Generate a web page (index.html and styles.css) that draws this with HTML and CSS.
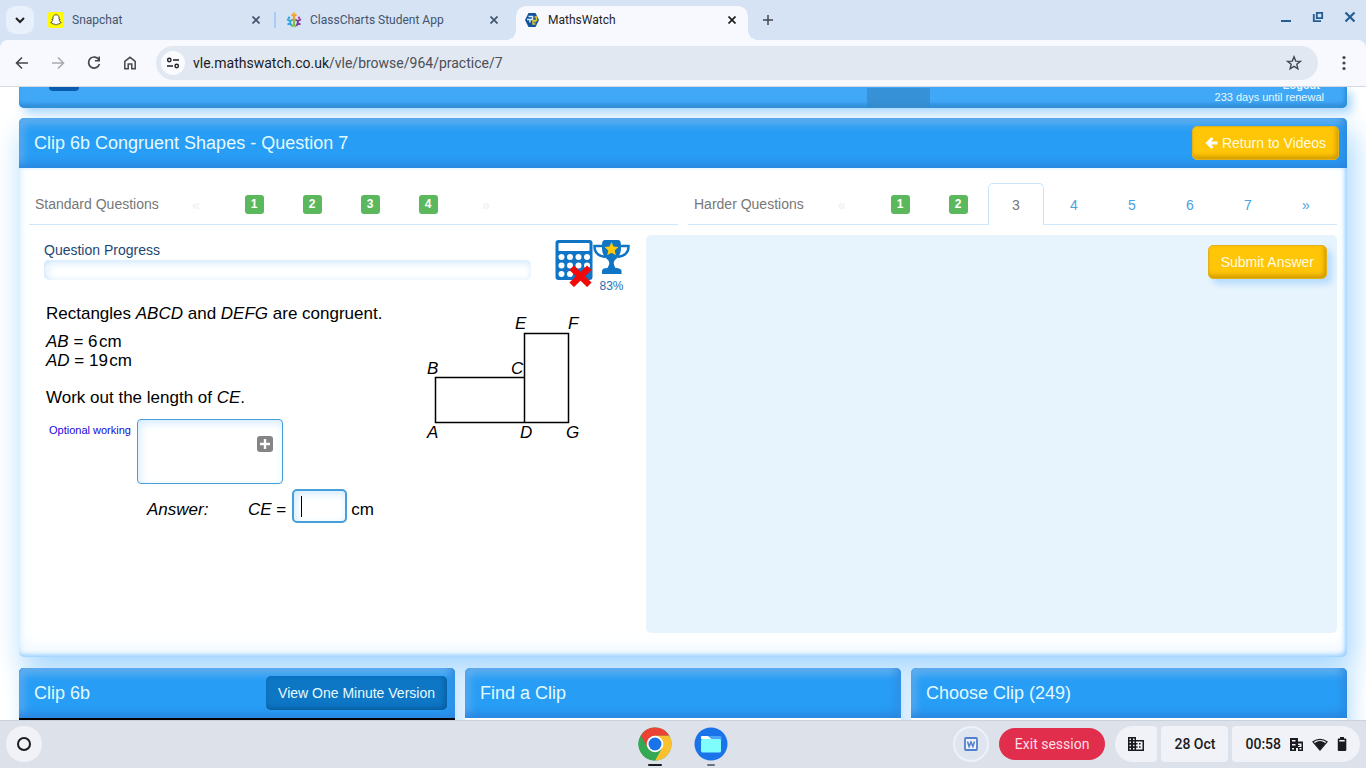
FILE: index.html
```html
<!DOCTYPE html>
<html lang="en">
<head>
<meta charset="utf-8">
<title>MathsWatch</title>
<link rel="stylesheet" href="styles.css">
</head>
<body>
<header class="tabstrip">
  <button class="tab-search" aria-label="Search tabs"><svg width="12" height="12" viewBox="0 0 12 12"><path d="M2 4l4 4 4-4" fill="none" stroke="#1f1f1f" stroke-width="2"/></svg></button>
  <div class="tab divided">
    <svg width="16" height="16" viewBox="0 0 16 16"><rect width="16" height="16" rx="2" fill="#fffc00"/><path d="M8 2.800c2 0 3.100 1.400 3.100 3.200v1.400l1-.2-.8 1.200c.4 1.200 1.200 1.900 2 2.200l-1.700.7-.4.800-1.500-.1L8 13.100l-1.700-1.100-1.500.1-.4-.8-1.700-.7c.8-.3 1.600-1 2-2.200L3.900 7.200l1 .2V6c0-1.800 1.100-3.200 3.100-3.200z" fill="#fff" stroke="#333" stroke-width=".8"/></svg>
    <span class="tab-title">Snapchat</span>
    <button class="tab-close" aria-label="Close Snapchat"><svg width="8" height="8" viewBox="0 0 8 8"><path d="M.5.5l7 7m0-7l-7 7" stroke="currentColor" stroke-width="1.700"/></svg></button>
  </div>
  <div class="tab">
    <svg width="16" height="16" viewBox="0 0 16 16"><g stroke-width="1.800" stroke-linejoin="round" fill="none"><path d="M8 7.500V4M5.500 2.500L8 4.200l2.500-1.700M8 6L6.500 8.500M8 6l1.500 2.500" stroke="#f59a2c"/><path d="M1 7.200L4 9l2.500-1.200M4 9l.3 2L1.500 12.500M4.300 11L5.500 14" stroke="#2ba5dd"/><path d="M15 7.200L12 9 9.500 7.800M12 9l-.3 2 2.800 1.500M11.700 11l-1.200 3" stroke="#7d3b98"/><path d="M8 9.500V12l-1.800 3M8 12l1.800 3" stroke="#7bbf45"/></g><circle cx="8" cy="1.600" r="1.300" fill="#f5b52c"/><circle cx="3" cy="5.800" r="1.200" fill="#2ba5dd"/><circle cx="13" cy="5.800" r="1.200" fill="#b8429b"/><circle cx="8" cy="8.800" r="1.600" fill="#8fc24a"/></svg>
    <span class="tab-title">ClassCharts Student App</span>
    <button class="tab-close" aria-label="Close ClassCharts"><svg width="8" height="8" viewBox="0 0 8 8"><path d="M.5.5l7 7m0-7l-7 7" stroke="currentColor" stroke-width="1.700"/></svg></button>
  </div>
  <div class="tab active">
    <svg width="16" height="16" viewBox="0 0 16 16"><path d="M4.500 1h7L15 8l-3.500 7h-7L1 8z" fill="#12539b"/><path d="M4.500 4.500h4v3H6v3M3 7.500h3" fill="none" stroke="#d5eefb" stroke-width="1.500"/><path d="M10.500 5h2v3.500H9V12h2.500M11 8.500v2" fill="none" stroke="#e6c52c" stroke-width="1.500"/></svg>
    <span class="tab-title">MathsWatch</span>
    <button class="tab-close" aria-label="Close MathsWatch"><svg width="8" height="8" viewBox="0 0 8 8"><path d="M.5.5l7 7m0-7l-7 7" stroke="currentColor" stroke-width="1.700"/></svg></button>
  </div>
  <button class="new-tab" aria-label="New tab"><svg width="10" height="10" viewBox="0 0 10 10"><path d="M5 0v10M0 5h10" stroke="#43474e" stroke-width="1.500"/></svg></button>
  <div class="window-controls">
    <button aria-label="Minimise"><svg width="12" height="12" viewBox="0 0 12 12"><path d="M1 10h10" stroke="#235d92" stroke-width="2"/></svg></button>
    <button aria-label="Restore"><svg width="12" height="12" viewBox="0 0 12 12"><path d="M4.800 1.800h5.400v5.400H4.800zM1.800 3v7.200H9" fill="none" stroke="#235d92" stroke-width="1.800"/></svg></button>
    <button aria-label="Close window"><svg width="12" height="12" viewBox="0 0 12 12"><path d="M1.500 1.500l9 9m0-9l-9 9" stroke="#235d92" stroke-width="2.200"/></svg></button>
  </div>
</header>
<nav class="toolbar">
  <button class="tool" aria-label="Back"><svg width="16" height="16" viewBox="0 0 16 16"><path d="M14 8H3M8 2.500L2.500 8 8 13.500" fill="none" stroke="#43474e" stroke-width="1.600"/></svg></button>
  <button class="tool" aria-label="Forward"><svg width="16" height="16" viewBox="0 0 16 16"><path d="M2 8h11M8 2.500L13.500 8 8 13.500" fill="none" stroke="#a9abb0" stroke-width="1.600"/></svg></button>
  <button class="tool" aria-label="Reload"><svg width="16" height="16" viewBox="0 0 16 16"><path d="M13 5A5.500 5.500 0 1 0 13.400 9" fill="none" stroke="#43474e" stroke-width="1.700"/><path d="M13.200 1.500v4.300H8.900" fill="none" stroke="#43474e" stroke-width="1.600"/></svg></button>
  <button class="tool" aria-label="Home"><svg width="16" height="16" viewBox="0 0 16 16"><path d="M2.800 6.300L8 2.300l5.200 4v7.400H9.800V9H6.200v4.700H2.800z" fill="none" stroke="#43474e" stroke-width="1.500"/></svg></button>
  <div class="omnibox">
    <button class="site-info" aria-label="Site information"><svg width="14" height="14" viewBox="0 0 14 14"><g fill="none" stroke="#202124" stroke-width="1.400"><circle cx="3.300" cy="4" r="1.700"/><path d="M7 4h6M1 10h6"/><circle cx="10.700" cy="10" r="1.700"/></g></svg></button>
    <span class="url">vle.mathswatch.co.uk<span class="path">/vle/browse/964/practice/7</span></span>
    <button class="bookmark" aria-label="Bookmark"><svg width="16" height="16" viewBox="0 0 16 16"><path d="M8 1.800l1.700 4.300 4.600.3-3.500 2.900 1.100 4.500L8 11.400l-3.900 2.400 1.100-4.500-3.500-2.900 4.600-.3z" fill="none" stroke="#43474e" stroke-width="1.400"/></svg></button>
  </div>
  <button class="more" aria-label="Menu"><svg width="4" height="16" viewBox="0 0 4 16" fill="#43474e"><circle cx="2" cy="2.500" r="1.600"/><circle cx="2" cy="8" r="1.600"/><circle cx="2" cy="13.500" r="1.600"/></svg></button>
</nav>

<main class="page">
  <div class="site-nav">
    <span class="site-logo"></span>
    <span class="nav-current"></span>
    <div class="account"><a class="logout" href="#">Logout</a><span>233 days until renewal</span></div>
  </div>

  <section class="panel">
    <div class="heading">
      <h1>Clip 6b Congruent Shapes - Question 7</h1>
      <button class="btn yellow"><svg width="13" height="12" viewBox="0 0 13 12"><path d="M12.500 6H3M7.500 1L2.500 6l5 5" fill="none" stroke="#fff" stroke-width="2.900"/></svg>Return to Videos</button>
    </div>
    <div class="panel-body">
      <div class="question-tabs">
        <div class="tab-row">
          <span class="row-label standard">Standard Questions</span>
          <a class="q off" href="#">«</a><a class="q" href="#"><b>1</b></a><a class="q" href="#"><b>2</b></a><a class="q" href="#"><b>3</b></a><a class="q" href="#"><b>4</b></a><a class="q off" href="#">»</a>
        </div>
        <div class="tab-row">
          <span class="row-label harder">Harder Questions</span>
          <a class="q off" href="#">«</a><a class="q" href="#"><b>1</b></a><a class="q" href="#"><b>2</b></a><a class="q current" href="#">3</a><a class="q" href="#">4</a><a class="q" href="#">5</a><a class="q" href="#">6</a><a class="q" href="#">7</a><a class="q" href="#">»</a>
        </div>
      </div>
      <div class="work">
        <div class="question">
          <div class="status">
            <div class="progress">
              <span id="progress-label">Question Progress</span>
              <div class="bar" role="progressbar" aria-labelledby="progress-label" aria-valuenow="0" aria-valuemin="0" aria-valuemax="100">0</div>
            </div>
            <svg class="calculator" width="38" height="48" viewBox="0 0 38 48"><rect x=".5" y="1" width="37" height="40" rx="3" fill="#0f75c4"/><rect x="3.500" y="4" width="31" height="8" rx="1" fill="#fff"/><g fill="#fff"><circle cx="6.500" cy="18" r="3"/><circle cx="15" cy="18" r="3"/><circle cx="23.500" cy="18" r="3"/><circle cx="32" cy="18" r="3"/><circle cx="6.500" cy="26.500" r="3"/><circle cx="15" cy="26.500" r="3"/><circle cx="23.500" cy="26.500" r="3"/><circle cx="32" cy="26.500" r="3"/><circle cx="6.500" cy="35" r="3"/><circle cx="15" cy="35" r="3"/></g><path d="M19 31l13 12.500m0-12.500L19 43.500" stroke="#f00909" stroke-width="6.500" stroke-linecap="square"/></svg>
            <div class="score">
              <svg width="37" height="36" viewBox="0 0 37 36"><path d="M9 7H1.500v1c0 6 4 9 11 10M28 7h7.500v1c0 6-4 9-11 10" fill="none" stroke="#0f75c4" stroke-width="2.400"/><path d="M12 1h13c3 0 3 3 3 8 0 7-3 9-6 12-2 2-1.500 5 .5 8 3.500 0 6 1 6 3v3H9v-3c0-2 2-3 5.500-3 2-3 2.500-6 .5-8-3-3-6-5-6-12 0-5 0-8 3-8z" fill="#0f75c4"/><path d="M18.500 3l2 4.600 5 .5-3.800 3.300 1.100 4.900-4.300-2.600-4.300 2.600 1.100-4.900-3.800-3.300 5-.5z" fill="#ffc808"/></svg>
              <span>83%</span>
            </div>
          </div>
          <div class="problem">
            <div class="statement">
              <p>Rectangles <i>ABCD</i> and <i>DEFG</i> are congruent.</p>
              <p class="given"><i>AB</i> = 6&#8202;cm<br><i>AD</i> = 19&#8202;cm</p>
              <p>Work out the length of <i>CE</i>.</p>
              <div class="working">
                <label for="working">Optional working</label>
                <div class="working-box">
                  <textarea id="working"></textarea>
                  <button class="expand" aria-label="Expand working"><svg width="16" height="16" viewBox="0 0 16 16"><rect width="16" height="16" rx="3" fill="#858585"/><path d="M8 3v10M3 8h10" stroke="#fff" stroke-width="2.400"/></svg></button>
                </div>
              </div>
              <div class="answer">
                <i class="answer-label">Answer:</i>
                <label for="answer"><i>CE</i> =</label>
                <span class="answer-box"><input id="answer" type="text"><span class="caret"></span></span>
                <span>cm</span>
              </div>
            </div>
            <svg class="diagram" width="160" height="130" viewBox="0 0 160 130" role="img" aria-label="Rectangles ABCD and DEFG">
              <path d="M11.500 64.500h89v45h-89zM100.500 20.500h44v89h-44z" fill="none" stroke="#000" stroke-width="1.500"/>
              <g class="vertex"><text x="3" y="125">A</text><text x="3" y="61">B</text><text x="87" y="61">C</text><text x="96" y="125">D</text><text x="91" y="16">E</text><text x="144" y="16">F</text><text x="142" y="125">G</text></g>
            </svg>
          </div>
        </div>
        <div class="answer-pad"><button class="btn yellow raised">Submit Answer</button></div>
      </div>
    </div>
  </section>

  <div class="cards">
    <section class="card video"><div class="heading"><h2>Clip 6b</h2><button class="btn blue">View One Minute Version</button></div></section>
    <section class="card"><div class="heading"><h2>Find a Clip</h2></div></section>
    <section class="card"><div class="heading"><h2>Choose Clip (249)</h2></div></section>
  </div>
</main>

<footer class="shelf">
  <button class="launcher" aria-label="Launcher"><svg width="16" height="16" viewBox="0 0 16 16"><circle cx="8" cy="8" r="6" fill="none" stroke="#1b1b1f" stroke-width="2"/></svg></button>
  <div class="apps">
    <button class="app" aria-label="Chrome"><svg width="34" height="34" viewBox="0 0 34 34"><circle cx="17" cy="17" r="16.500" fill="#34a853"/><path d="M17 17L2.700 8.700A16.500 16.500 0 0 1 31.300 8.700H17z" fill="#ea4335"/><path d="M17 8.700h14.300A16.500 16.500 0 0 1 17 33.500l7.200-12.400z" fill="#fbc02d"/><path d="M2.700 8.700L9.800 21.200 17 17V8.700z" fill="#ea4335"/><path d="M2.700 8.700L9.900 21.200l7.100 4 4-1L17 33.500A16.500 16.500 0 0 1 2.700 8.700z" fill="#34a853"/><circle cx="17" cy="17" r="8.300" fill="#fff"/><circle cx="17" cy="17" r="6.500" fill="#1a73e8"/></svg><span class="running wide"></span></button>
    <button class="app" aria-label="Files"><svg width="34" height="34" viewBox="0 0 34 34"><circle cx="17" cy="17" r="16.500" fill="#1a73e8"/><path d="M15 9h11a1.500 1.500 0 0 1 1.500 1.500V14H15z" fill="#4ba6f8"/><rect x="7" y="12" width="20" height="13.500" rx="1.500" fill="#7ffcfc"/><path d="M7 12v-2a1 1 0 0 1 1-1h6l3.500 3z" fill="#fff"/></svg><span class="running"></span></button>
  </div>
  <div class="tray">
    <button class="word" aria-label="Document"><svg width="14" height="14" viewBox="0 0 14 14"><rect x="1" y="1" width="12" height="12" rx="1" fill="#fff" fill-opacity=".5" stroke="#527fce" stroke-width="1.800"/><path d="M3.500 4.500l1.600 5L7 5l1.900 4.500 1.600-5" fill="none" stroke="#527fce" stroke-width="1.500"/></svg></button>
    <button class="exit">Exit session</button>
    <div class="pills">
      <button class="pill" aria-label="Managed device"><svg width="16" height="14" viewBox="0 0 16 14"><path fill="#1b1b1f" fill-rule="evenodd" d="M0 0h8v3h8v11H0zM1.500 1.500v1.500H3V1.500zm3.500 0v1.500h1.500V1.500zM1.500 4.600v1.500H3V4.600zm3.500 0v1.500h1.500V4.600zM1.500 7.700v1.500H3V7.700zm3.500 0v1.500h1.500V7.700zM1.500 10.900v1.500H3v-1.500zm3.500 0v1.500h1.500v-1.500zM8 4.500v1.600h1.500v1.500H8v1.600h1.500v1.600H8v1.700h6.500v-8zm3 1.500h1.600v1.600H11zm0 3.200h1.600v1.600H11z"/></svg></button>
      <button class="pill">28 Oct</button>
      <button class="pill">00:58
        <svg width="13" height="13" viewBox="0 0 13 13"><path fill="#1b1b1f" fill-rule="evenodd" d="M0 0h8v3.500h5V13H8v-3H6v3H0zM2 2v1.500h3.500V2zm0 4v1.500h3.500V6zm0 4v1.500h2V10zm6-4.500V7h1.500v1H8v1h3.500V5.500zM9.500 10v1.500h2V10z"/></svg>
        <svg width="16" height="13" viewBox="0 0 16 13"><path fill="none" stroke="#1b1b1f" stroke-width="1.200" d="M1 3.800a11.500 11.500 0 0 1 14 0L8 12z"/><path fill="#1b1b1f" d="M2.500 5.200a9 9 0 0 1 11 0L8 12z"/></svg>
        <svg width="10" height="14" viewBox="0 0 10 14"><path fill="#1b1b1f" fill-rule="evenodd" d="M3 0h4v1.500h1.500a.8.8 0 0 1 .8.8V13a1 1 0 0 1-1 1H1.800a1 1 0 0 1-1-1V2.300a.8.800 0 0 1 .8-.8H3zM2.300 3v1.500h5.400V3z"/></svg>
      </button>
    </div>
  </div>
</footer>
</body>
</html>
```
FILE: styles.css
```css
* { box-sizing: border-box; }
body {
  margin: 0;
  height: 100vh;
  display: flex;
  flex-direction: column;
  overflow: hidden;
  background: #d5e3f5;
  font-family: "Liberation Sans", Arial, sans-serif;
}
button { border: 0; padding: 0; background: none; font: inherit; color: inherit; display: flex; align-items: center; justify-content: center; flex: none; }
a { text-decoration: none; color: inherit; }
h1, h2, p { margin: 0; font-weight: 400; }
svg { display: block; flex: none; }

/* Browser window */
.tabstrip { display: flex; align-items: center; height: 40px; flex: none; padding: 0 10px 0 6px; font: 12px Roboto, sans-serif; color: #43546b; }
.tab-search { width: 28px; height: 28px; border-radius: 9px; background: #e8f0fc; margin-right: 6px; }
.tab { position: relative; display: flex; align-items: center; width: 232px; height: 34px; margin: 6px 6px 0 0; padding: 0 12px 6px 8px; gap: 8px; }
.tab.divided::after { content: ""; position: absolute; right: -4px; top: 6px; width: 2px; height: 16px; background: #a8cbfa; }
.tab-title { flex: 1; }
.tab.active { background: #f8f9fe; color: #1f1f1f; border-radius: 10px 10px 0 0; }
.tab.active::before, .tab.active::after { content: ""; position: absolute; bottom: 0; width: 10px; height: 10px; }
.tab.active::before { left: -10px; background: radial-gradient(circle at 0 0, transparent 10px, #f8f9fe 10px); }
.tab.active::after { right: -10px; background: radial-gradient(circle at 100% 0, transparent 10px, #f8f9fe 10px); }
.new-tab { width: 28px; height: 28px; }
.window-controls { display: flex; gap: 20px; margin-left: auto; padding-bottom: 6px; }
.toolbar { display: flex; align-items: center; height: 47px; flex: none; padding: 0 8px 0 4px; background: #f8f9fe; border-bottom: 1px solid #d5dae2; border-radius: 8px 8px 0 0; }
.tool { width: 36px; height: 36px; }
.omnibox { display: flex; align-items: center; flex: 1; height: 34px; margin-left: 8px; padding: 0 16px 0 5px; border-radius: 17px; background: #e2e8f1; }
.site-info { width: 24px; height: 24px; border-radius: 12px; background: #fafbff; }
.url { flex: 1; margin-left: 8px; font: 14px Roboto, sans-serif; color: #1b1c1f; }
.path { color: #4b4f57; }
.more { width: 28px; height: 28px; margin-left: 12px; }

/* Site */
.page { flex: 1; min-height: 0; overflow: hidden; padding: 0 19px; background: #fff; }
.site-nav { position: relative; display: flex; align-items: flex-end; height: 21px; border-radius: 0 0 5px 5px; background: #41a7f7; box-shadow: inset -2px -4px 4px #2b8bd5, 5px 5px 10px #a9d8ff; }
.site-logo { width: 30px; height: 4px; margin-left: 30px; align-self: flex-start; border-radius: 0 0 4px 4px; background: #0b5dab; }
.nav-current { position: absolute; left: 64%; width: 63px; height: 20px; margin-left: -2px; background: rgba(50, 135, 200, .7); }
.account { display: flex; flex-direction: column; justify-content: flex-end; align-items: flex-end; margin-left: auto; padding: 0 23px 5px 0; height: 21px; overflow: hidden; font-size: 11px; line-height: 12px; color: #e6f8ff; }
.logout { font-weight: 700; padding-right: 4px; flex: none; }
.account span { flex: none; }
.panel { margin-top: 10px; border-radius: 5px; background: #fff; box-shadow: 5px 14px 30px #a0d4ff; position: relative; }
.heading { display: flex; align-items: center; justify-content: space-between; height: 50px; padding: 0 8px 0 15px; border-radius: 5px 5px 0 0; background: #289df5; color: #e2fbff; box-shadow: inset -3px -4px 10px #2882dd, inset 3px 5px 10px #6fb5ee; }
.heading h1, .heading h2 { font-size: 18px; line-height: 24px; }
.btn { height: 34px; padding: 0 12px; border-radius: 5px; font-size: 14px; gap: 4px; }
.yellow { background: #ffc507; color: #fffce0; border: 1px solid #e3b21a; box-shadow: inset -2px -3px 4px #d39c00; }
.raised { box-shadow: inset -2px -3px 4px #d39c00, 5px 5px 6px #b5dbfc; }
.blue { background: #0d76c5; color: #e5faff; box-shadow: inset -2px -2px 5px #075b9b; }
.panel-body { padding: 15px 10px 24px; border-radius: 0 0 5px 5px; box-shadow: inset -2px -2px 4px #92cdff, inset 0 -10px 24px -12px #c9e6ff, inset 3px 0 4px #eff8ff; }
.question-tabs { display: grid; grid-template-columns: 1fr 1fr; gap: 10px; font-size: 14px; color: #777; }
.tab-row { display: flex; height: 42px; border-bottom: 1px solid #cfe7fa; }
.row-label { padding: 0 6px; line-height: 42px; white-space: nowrap; }
.standard { width: 139px; }
.harder { width: 126px; }
.q { width: 56px; height: 42px; margin-right: 2px; display: flex; align-items: center; justify-content: center; border: 1px solid transparent; border-bottom: 0; color: #48a2e2; }
.q b { width: 19px; border-radius: 3px; background: #5cb85c; color: #fff; font-size: 12px; line-height: 19px; text-align: center; }
.q.off { color: #ededed; }
.q.current { border-color: #c9e5fb; border-radius: 5px 5px 0 0; background: #fff; color: #777; }
.work { display: grid; grid-template-columns: 617fr 691fr; margin-top: 10px; min-height: 398px; }
.answer-pad { display: flex; justify-content: flex-end; align-items: flex-start; padding: 10px; border-radius: 5px; background: #e7f4fe; }
.question { padding: 4px 16px 4px 15px; }
.status { display: flex; }
.progress { flex: 1; margin-right: 24px; padding-top: 2px; font-size: 14px; line-height: 19px; color: #1d4673; }
.bar { height: 20px; padding-left: 1px; border-radius: 5px; font-size: 12px; line-height: 20px; color: #f4faff; box-shadow: inset 2px 2px 8px #c9e5fc; }
.score { display: flex; flex-direction: column; align-items: center; font-size: 12px; line-height: 22px; color: #1d70b8; }
.problem { display: flex; justify-content: space-between; margin-top: 7px; padding: 0 46px 0 2px; color: #000; font-size: 17px; }
.statement { line-height: 19px; }
.statement p { white-space: nowrap; }
.statement .given { margin: 9px 0 18px; }
.working { display: flex; gap: 6px; margin: 12px 0 5px 3px; }
.working label { font-size: 11px; line-height: 22px; color: #2008d8; white-space: nowrap; }
.working-box { position: relative; width: 146px; height: 65px; }
textarea, input { display: block; font: inherit; margin: 0; outline: 0; background: #fff; border: 1px solid #459fd8; border-radius: 4px; box-shadow: inset 2px 3px 8px #d3ebff; }
textarea { width: 100%; height: 100%; resize: none; }
.expand { position: absolute; right: 10px; top: 17px; }
.answer { display: flex; align-items: center; gap: 4px; margin-left: 101px; }
.answer > label, .answer > span:last-child, .answer-label { padding-top: 7px; }
.answer-label { width: 97px; }
.answer > label { white-space: nowrap; margin-right: 2px; }
.answer-box { position: relative; }
.answer input { width: 55px; height: 34px; border-width: 2px; border-radius: 5px; }
.caret { position: absolute; left: 9px; top: 7px; width: 1px; height: 21px; background: #000; }
.diagram { margin-top: 9px; }
.vertex { font: italic 17px "Liberation Sans", Arial, sans-serif; }
.cards { position: relative; display: grid; grid-template-columns: repeat(3, 1fr); gap: 10px; margin-top: 11px; }
.card { min-height: 200px; border-radius: 5px; background: #fff; box-shadow: 5px 5px 20px #b9e0ff; }
.card.video { background: #000; }

/* Shelf */
.shelf { position: relative; display: flex; align-items: center; justify-content: space-between; height: 48px; flex: none; padding: 0 6px 1px; background: #dde1ea; border-top: 1px solid #ccd2dc; font: 14px Roboto, sans-serif; color: #1b1b1f; }
.launcher { width: 36px; height: 36px; border-radius: 18px; background: #f1f2f8; }
.apps { position: absolute; left: 50%; top: 6px; margin-left: -45px; display: flex; gap: 22px; }
.app { flex-direction: column; gap: 3px; border-radius: 17px; }
.running { width: 8px; height: 2px; border-radius: 1px; background: #6a7180; }
.running.wide { width: 14px; background: #1b1b1f; }
.tray { display: flex; align-items: center; gap: 10px; }
.word { width: 36px; height: 36px; border: 2px solid #eff1f8; border-radius: 18px; background: #dfe5ef; }
.exit { height: 32px; padding: 0 16px; border-radius: 16px; background: #e12e4d; color: #ffdfe5; }
.pills { display: flex; gap: 4px; }
.pill { height: 36px; padding: 0 13px; border-radius: 4px; background: #f0f2f8; font-weight: 500; gap: 9px; }
.pill:first-child { border-radius: 18px 4px 4px 18px; }
.pill:last-child { border-radius: 4px 18px 18px 4px; }
```
